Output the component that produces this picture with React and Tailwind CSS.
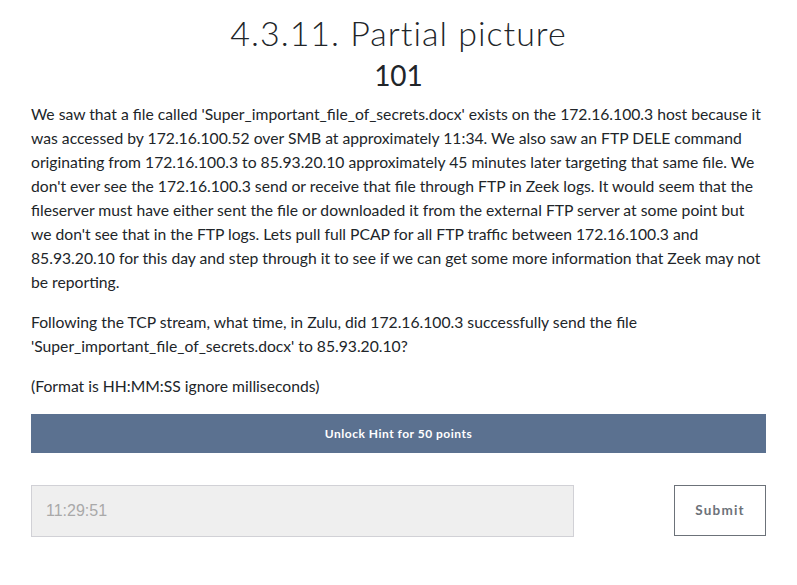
import React from 'react';

const App = () => {
  return (
    <div className="min-h-screen bg-white px-[31px] pt-[9px] text-[#212529]" style={{ fontFamily: 'Lato, sans-serif' }}>
      {/* Titulo */}
      <h1 className="text-center text-[34px] font-light leading-[48px] tracking-[1px] text-[#212529]">
        4.3.11. Partial picture
      </h1>
      <h2 className="text-center text-[28px] font-normal leading-[36px] text-[#212529]">101</h2>

      {/* Descripcion */}
      <div className="mt-[9px] text-[15.7px] leading-[24px]">
        <p className="mb-[16px]">
          We saw that a file called 'Super_important_file_of_secrets.docx' exists on the 172.16.100.3 host because it was accessed by 172.16.100.52 over SMB at approximately 11:34. We also saw an FTP DELE command originating from 172.16.100.3 to 85.93.20.10 approximately 45 minutes later targeting that same file. We don't ever see the 172.16.100.3 send or receive that file through FTP in Zeek logs. It would seem that the fileserver must have either sent the file or downloaded it from the external FTP server at some point but we don't see that in the FTP logs. Lets pull full PCAP for all FTP traffic between 172.16.100.3 and 85.93.20.10 for this day and step through it to see if we can get some more information that Zeek may not be reporting.
        </p>
        <p className="mb-[16px]">
          Following the TCP stream, what time, in Zulu, did 172.16.100.3 successfully send the file 'Super_important_file_of_secrets.docx' to 85.93.20.10?
        </p>
        <p>(Format is HH:MM:SS ignore milliseconds)</p>
      </div>

      {/* Pista */}
      <button className="mt-[16px] flex h-[39px] w-full items-center justify-center bg-[#5b7190] text-[12px] font-bold tracking-[0.5px] text-white">
        Unlock Hint for 50 points
      </button>

      {/* Respuesta */}
      <div className="mt-[32px] flex items-start justify-between">
        <input
          type="text"
          placeholder="11:29:51"
          className="h-[52px] w-[543px] border border-[#d1d1d6] bg-[#efefef] px-[14px] text-[16px] placeholder-[#a9a9a9] outline-none"
          style={{ fontFamily: '"Liberation Sans", Arial, sans-serif' }}
        />
        <button className="h-[51px] w-[92px] border border-[#6c7279] bg-white text-[13.5px] font-bold tracking-[1.2px] text-[#6c7279]">
          Submit
        </button>
      </div>
    </div>
  );
};

export default App;
